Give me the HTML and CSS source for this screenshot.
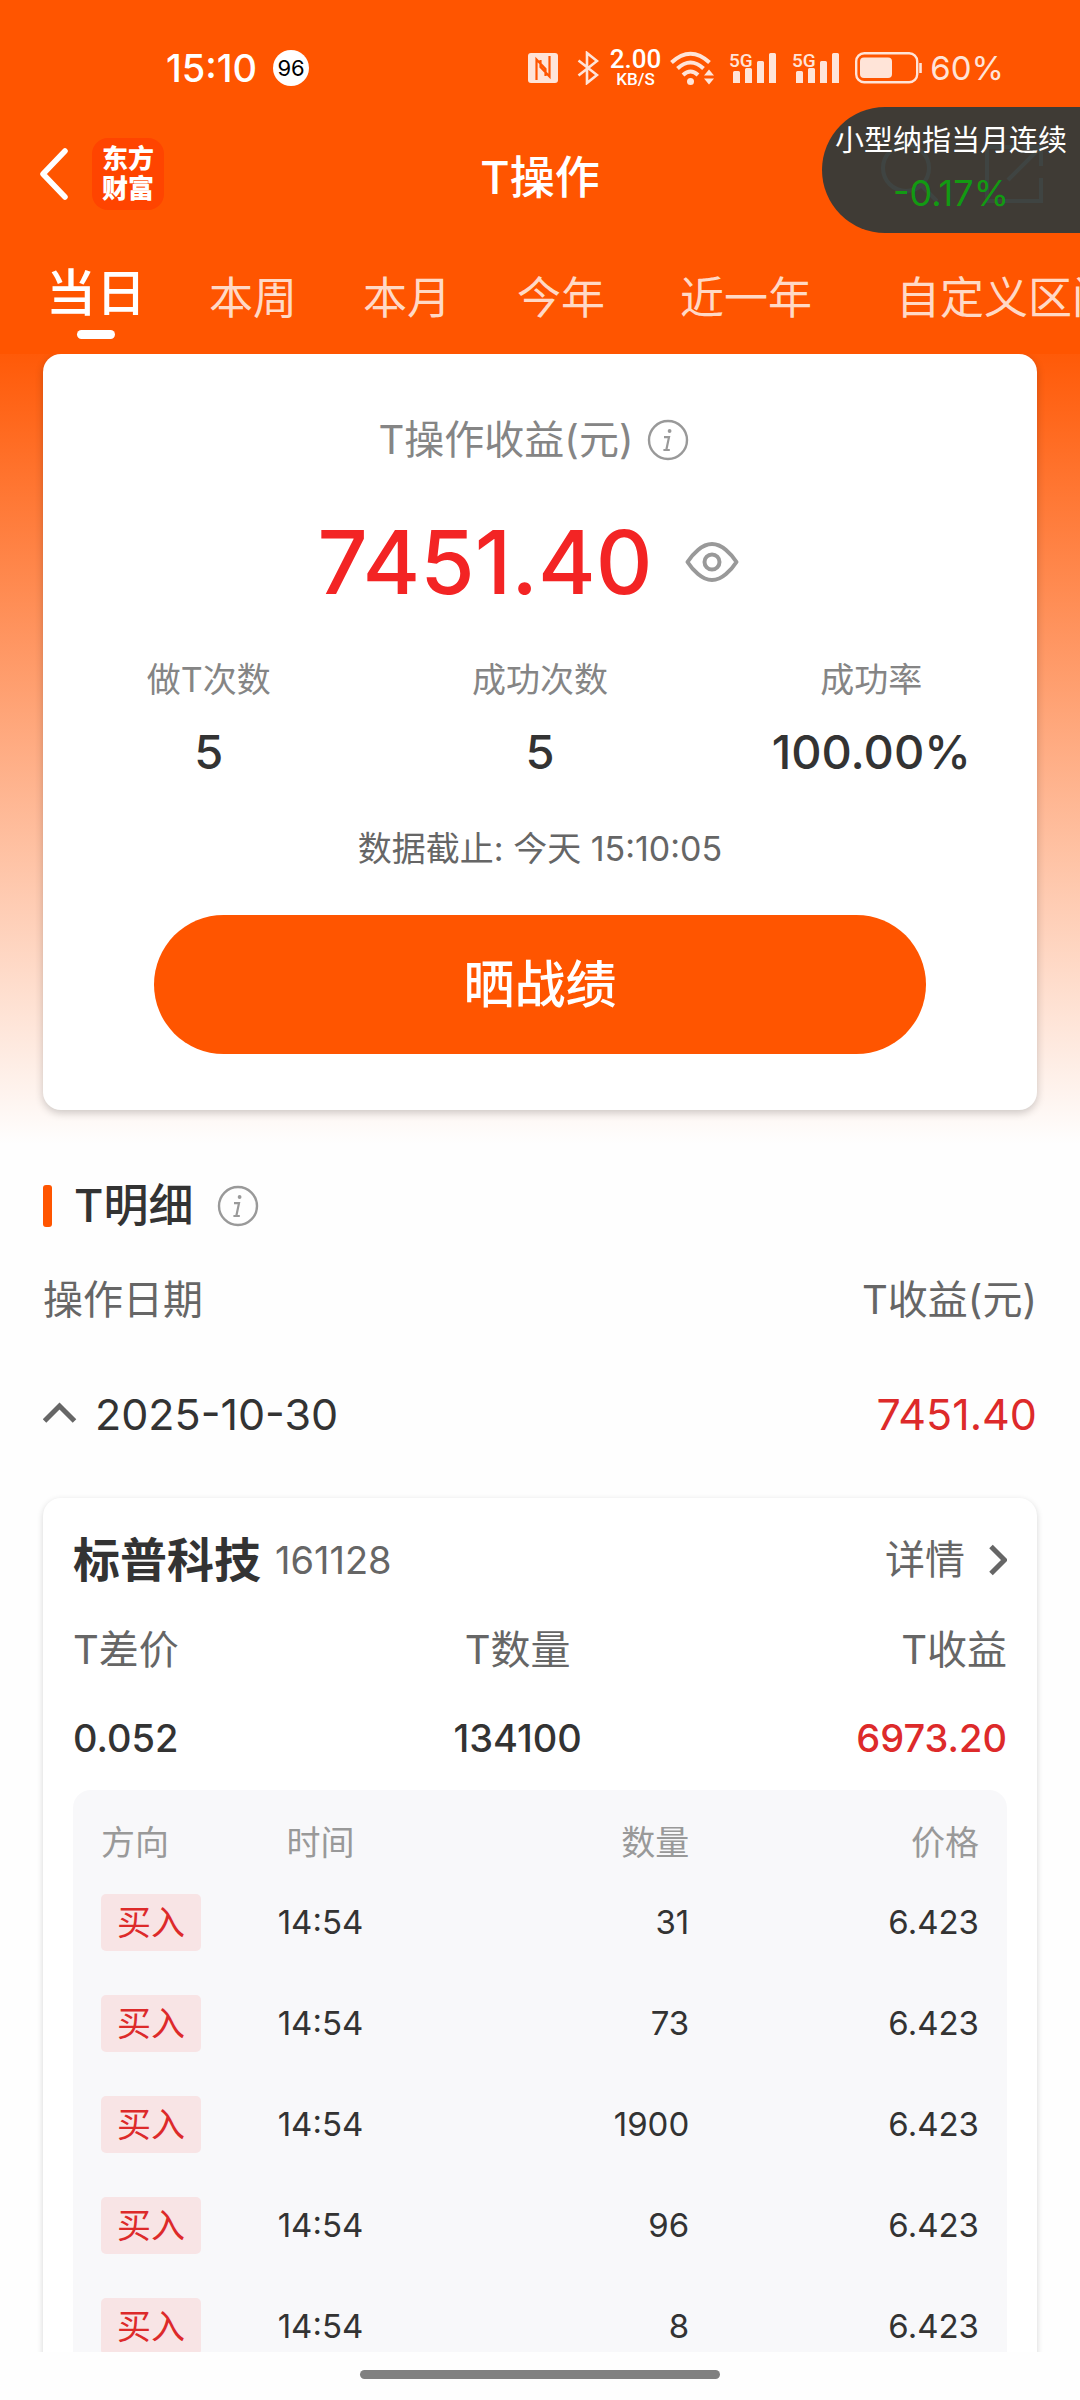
FILE: index.html
```html
<!DOCTYPE html>
<html lang="zh-CN">
<head>
<meta charset="utf-8">
<meta name="viewport" content="width=device-width, initial-scale=1">
<title>T操作</title>
<link rel="stylesheet" href="styles.css">
</head>
<body>
<header class="top">
  <div class="status">
    <div class="status-left">
      <span class="clock">15:10</span>
      <span class="count">96</span>
    </div>
    <div class="status-right">
      <svg class="nfc" width="30" height="30" viewBox="0 0 30 30" aria-label="NFC">
        <rect width="30" height="30" rx="3" fill="currentColor"/>
        <path d="M8.500 27V6.500l9 9.500v7M21.500 3v20.500l-9-9.500V7" fill="none" stroke="#ff5500" stroke-width="2.200"/>
      </svg>
      <svg class="bluetooth" width="22" height="34" viewBox="0 0 22 34" aria-label="蓝牙">
        <path d="M1.500 9.500L20 24 10 32V2l10 8L1.500 24.500" fill="none" stroke="currentColor" stroke-width="2.600"/>
      </svg>
      <span class="speed"><span class="speed-value">2.00</span><span class="speed-unit">KB/S</span></span>
      <svg class="wifi" width="44" height="34" viewBox="0 0 44 34" aria-label="WLAN">
        <g fill="none" stroke="currentColor" stroke-width="4">
          <path d="M1.500 11.500Q20.500-6 39.500 11.500"/>
          <path d="M7.500 17.500Q20.500 5.500 33.500 17.500"/>
          <path d="M13 24Q20.500 17 28 24"/>
        </g>
        <circle cx="20.500" cy="30.500" r="3.500" fill="currentColor"/>
        <path d="M34 24.500l5-6 5 6zM34 27.500h10l-5 6z" fill="currentColor"/>
      </svg>
      <svg class="signal" width="48" height="36" viewBox="0 0 48 36">
        <text class="signal-text" x="0" y="17">5G</text>
        <path d="M4 22.500q0-1.500 1.500-1.500h4q1.500 0 1.500 1.500v10.500h-7zM16 19.500q0-1.500 1.500-1.500h4q1.500 0 1.500 1.500v13.500h-7zM28 12.500q0-1.500 1.500-1.500h4q1.500 0 1.500 1.500v20.500h-7zM40 4.500q0-1.500 1.500-1.500h4q1.500 0 1.500 1.500v28.500h-7z" fill="currentColor"/>
      </svg>
      <svg class="signal" width="48" height="36" viewBox="0 0 48 36">
        <text class="signal-text" x="0" y="17">5G</text>
        <path d="M4 22.500q0-1.500 1.500-1.500h4q1.500 0 1.500 1.500v10.500h-7zM16 19.500q0-1.500 1.500-1.500h4q1.500 0 1.500 1.500v13.500h-7zM28 12.500q0-1.500 1.500-1.500h4q1.500 0 1.500 1.500v20.500h-7zM40 4.500q0-1.500 1.500-1.500h4q1.500 0 1.500 1.500v28.500h-7z" fill="currentColor"/>
      </svg>
      <svg class="battery" width="68" height="32" viewBox="0 0 68 32" aria-hidden="true">
        <rect x="1.200" y="1.200" width="61" height="29" rx="8" fill="none" stroke="currentColor" stroke-width="2.400"/>
        <rect x="5" y="5.500" width="32" height="20.500" rx="4" fill="currentColor"/>
        <path d="M65.500 11v10" stroke="currentColor" stroke-width="2.600"/>
      </svg>
      <span class="battery-level">60%</span>
    </div>
  </div>

  <div class="nav">
    <div class="nav-side">
      <button class="icon-button" aria-label="返回">
        <svg width="32" height="54" viewBox="0 0 32 54"><path d="M29 4L7 27l22 23" fill="none" stroke="currentColor" stroke-width="5.500" stroke-linecap="round" stroke-linejoin="round"/></svg>
      </button>
      <a class="logo" href="#"><span>东方</span><span>财富</span></a>
    </div>
    <h1 class="nav-title">T操作</h1>
    <div class="nav-side nav-side--end">
      <button class="icon-button" aria-label="搜索">
        <svg width="60" height="60" viewBox="0 0 60 60"><circle cx="28" cy="24" r="23" fill="none" stroke="currentColor" stroke-width="4"/><path d="M43 41l16 16" stroke="currentColor" stroke-width="4"/></svg>
      </button>
      <button class="icon-button" aria-label="分享">
        <svg width="60" height="60" viewBox="0 0 60 60"><path d="M30 3H3v54h54V34M38 3h19v19M57 3L24 36" fill="none" stroke="currentColor" stroke-width="4"/></svg>
      </button>
    </div>
  </div>

  <nav class="tabs">
    <button class="tab tab--active">当日</button>
    <button class="tab">本周</button>
    <button class="tab">本月</button>
    <button class="tab">今年</button>
    <button class="tab tab--long">近一年</button>
    <button class="tab tab--long">自定义区间</button>
  </nav>
</header>

<aside class="ticker">
  <span class="ticker-name">小型纳指当月连续</span>
  <span class="ticker-change">-0.17%</span>
</aside>

<main class="content">
  <section class="card summary">
    <div class="summary-title">
      <h2>T操作收益(元)</h2>
      <button class="icon-button muted" aria-label="说明">
        <svg width="42" height="42" viewBox="0 0 42 42"><circle cx="21" cy="21" r="19" fill="none" stroke="currentColor" stroke-width="2.400"/><circle cx="22.600" cy="12" r="1.900" fill="currentColor"/><path d="M17 18.200h5l-2.600 12.200M16.400 31h6.400" fill="none" stroke="currentColor" stroke-width="2.200"/></svg>
      </button>
    </div>
    <div class="summary-total">
      <span class="total">7451.40</span>
      <button class="icon-button muted" aria-label="隐藏金额">
        <svg width="54" height="42" viewBox="0 0 54 42"><path d="M2.500 21Q7 14 13 9Q20 3 27 3T41 9Q47 14 51.500 21Q47 28 41 33Q34 39 27 39T13 33Q7 28 2.500 21Z" fill="none" stroke="currentColor" stroke-width="4" stroke-linejoin="round"/><circle cx="27" cy="21" r="7.500" fill="none" stroke="currentColor" stroke-width="4"/></svg>
      </button>
    </div>
    <dl class="stats">
      <div><dt>做T次数</dt><dd>5</dd></div>
      <div><dt>成功次数</dt><dd>5</dd></div>
      <div><dt>成功率</dt><dd>100.00%</dd></div>
    </dl>
    <p class="updated">数据截止: 今天 15:10:05</p>
    <button class="share">晒战绩</button>
  </section>

  <section class="details">
    <div class="details-head">
      <h2>T明细</h2>
      <button class="icon-button muted" aria-label="说明">
        <svg width="42" height="42" viewBox="0 0 42 42"><circle cx="21" cy="21" r="19" fill="none" stroke="currentColor" stroke-width="2.400"/><circle cx="22.600" cy="12" r="1.900" fill="currentColor"/><path d="M17 18.200h5l-2.600 12.200M16.400 31h6.400" fill="none" stroke="currentColor" stroke-width="2.200"/></svg>
      </button>
    </div>
    <div class="list-head"><span>操作日期</span><span>T收益(元)</span></div>
    <button class="day" aria-expanded="true">
      <svg width="34" height="24" viewBox="0 0 34 24"><path d="M1.500 19L16.500 4l15 15" fill="none" stroke="#666" stroke-width="5"/></svg>
      <span class="day-date">2025-10-30</span>
      <span class="rise">7451.40</span>
    </button>

    <article class="card stock">
      <div class="stock-head">
        <h3>标普科技</h3>
        <span class="stock-code">161128</span>
        <a class="stock-link" href="#">详情
          <svg width="20" height="32" viewBox="0 0 20 32"><path d="M4 2.500L17.500 16 4 29.500" fill="none" stroke="currentColor" stroke-width="5"/></svg>
        </a>
      </div>
      <dl class="figures">
        <div><dt>T差价</dt><dd>0.052</dd></div>
        <div class="figure--center"><dt>T数量</dt><dd>134100</dd></div>
        <div class="figure--end"><dt>T收益</dt><dd class="rise">6973.20</dd></div>
      </dl>
      <div class="trades">
        <table>
          <colgroup><col class="col-side"><col class="col-time"><col class="col-number"><col class="col-number"></colgroup>
          <thead>
            <tr><th scope="col" class="side">方向</th><th scope="col">时间</th><th scope="col" class="number">数量</th><th scope="col" class="number">价格</th></tr>
          </thead>
          <tbody>
            <tr><td class="side"><span class="tag">买入</span></td><td>14:54</td><td class="number">31</td><td class="number">6.423</td></tr>
            <tr><td class="side"><span class="tag">买入</span></td><td>14:54</td><td class="number">73</td><td class="number">6.423</td></tr>
            <tr><td class="side"><span class="tag">买入</span></td><td>14:54</td><td class="number">1900</td><td class="number">6.423</td></tr>
            <tr><td class="side"><span class="tag">买入</span></td><td>14:54</td><td class="number">96</td><td class="number">6.423</td></tr>
            <tr><td class="side"><span class="tag">买入</span></td><td>14:54</td><td class="number">8</td><td class="number">6.423</td></tr>
          </tbody>
        </table>
      </div>
    </article>
  </section>
</main>

<footer class="home"><span class="home-bar"></span></footer>
</body>
</html>
```

FILE: styles.css
```css
* {
  box-sizing: border-box;
  margin: 0;
  padding: 0;
}

:root {
  --orange: #ff5500;
  --red: #dd2a2a;
  --ink: #333;
  --text: #666;
  --muted: #999;
}

body {
  display: flex;
  flex-direction: column;
  height: 100vh;
  overflow: hidden;
  background: #fefefe;
  color: var(--ink);
  font-family: Inter, "Noto Sans CJK SC", sans-serif;
  font-size: 40px;
}

button {
  border: 0;
  background: none;
  color: inherit;
  font: inherit;
}

a {
  color: inherit;
  text-decoration: none;
}

h1, h2, h3, th {
  font-weight: 400;
}

svg {
  display: block;
  flex: none;
}

.icon-button {
  flex: none;
}

.muted {
  color: var(--muted);
}

.rise {
  color: var(--red);
}

/* Header */

.top {
  flex: none;
  background: var(--orange);
  color: #fff;
}

.status {
  display: flex;
  justify-content: space-between;
  align-items: center;
  padding: 44px 76px 0 166px;
  line-height: 48px;
}

.status-left,
.status-right {
  display: flex;
  align-items: center;
}

.status-left {
  gap: 16px;
}

.clock {
  font-size: 38px;
  font-weight: 500;
}

.count {
  width: 36px;
  border-radius: 18px;
  background: #fff;
  color: #000;
  font-size: 22px;
  line-height: 36px;
  text-align: center;
}

.status-right {
  gap: 15px;
  color: #ffe4d8;
}

.nfc {
  margin-right: 4px;
}

.bluetooth {
  margin-right: -4px;
}

.speed {
  display: flex;
  flex-direction: column;
  align-items: center;
  color: #fff;
  font-family: Roboto, sans-serif;
  font-weight: 500;
}

.speed-value {
  font-size: 26px;
  line-height: 22px;
}

.speed-unit {
  font-size: 17px;
  line-height: 18px;
}

.wifi {
  margin-left: -6px;
}

.signal-text {
  fill: currentColor;
  font: 500 19px Roboto, sans-serif;
}

.battery-level {
  margin-left: -8px;
  font-size: 33px;
}

.nav {
  display: grid;
  grid-template-columns: 1fr auto 1fr;
  align-items: center;
  height: 164px;
  padding: 0 36px;
}

.nav-side {
  display: flex;
  align-items: center;
  gap: 24px;
}

.nav-side--end {
  justify-content: flex-end;
  gap: 46px;
}

.nav-title {
  font-size: 45px;
  font-weight: 500;
}

.logo {
  display: flex;
  flex-direction: column;
  align-items: center;
  padding: 6px 0;
  width: 72px;
  border-radius: 16px;
  background: #ff4400;
  font-size: 26px;
  font-weight: 900;
  line-height: 30px;
}

.tabs {
  display: flex;
  align-items: flex-start;
  height: 98px;
  padding-left: 16px;
  overflow: hidden;
}

.tab {
  flex: none;
  padding: 0 33px;
  color: #ffd9c6;
  font-size: 44px;
  line-height: 84px;
}

.tab--long {
  padding: 0 42px;
}

.tab--active {
  display: flex;
  flex-direction: column;
  align-items: center;
  padding: 0 30px;
  color: #fff;
  font-size: 50px;
  font-weight: 500;
  line-height: 74px;
}

.tab--active::after {
  content: "";
  width: 38px;
  height: 9px;
  border-radius: 5px;
  background: #fff;
}

/* Floating quote over the header */

.ticker {
  position: absolute;
  top: 107px;
  right: 0;
  display: flex;
  flex-direction: column;
  align-items: center;
  padding: 12px 13px;
  height: 126px;
  border-radius: 63px 0 0 63px;
  background: rgba(53, 58, 56, 0.95);
  color: #fff;
}

.ticker-name {
  font-size: 29px;
  line-height: 44px;
}

.ticker-change {
  color: #129a12;
  font-size: 36px;
  line-height: 60px;
}

/* Scrolling content */

.content {
  flex: 1;
  min-height: 0;
  overflow: hidden auto;
  scrollbar-width: none;
  padding: 0 43px;
  background: linear-gradient(#ff5a08, #fefefe 790px);
}

.card {
  background: #fff;
  border-radius: 18px;
  box-shadow: 0 3px 8px rgba(0, 0, 0, 0.2);
}

.summary {
  display: flex;
  flex-direction: column;
  align-items: center;
  padding-bottom: 56px;
}

.summary-title {
  display: flex;
  align-items: center;
  gap: 13px;
  padding: 56px 13px 0 0;
  color: #858585;
  line-height: 60px;
}

.summary-title h2,
.details-head h2 {
  font-size: inherit;
}

.summary-total {
  display: flex;
  align-items: center;
  gap: 32px;
  padding: 32px 24px 0 0;
  line-height: 120px;
}

.total {
  color: #f32424;
  font-size: 88px;
  font-weight: 500;
}

.stats {
  display: grid;
  grid-template-columns: repeat(3, 1fr);
  align-self: stretch;
  padding-top: 32px;
  text-align: center;
}

.stats dt {
  color: #858585;
  font-size: 34px;
  line-height: 52px;
}

.stats dd {
  padding-top: 16px;
  font-size: 47px;
  font-weight: 500;
  line-height: 60px;
}

.updated {
  padding-top: 42px;
  color: var(--text);
  font-size: 34px;
  line-height: 50px;
}

.share {
  align-self: stretch;
  margin: 41px 111px 0;
  border-radius: 70px;
  background: var(--orange);
  color: #fff;
  font-size: 51px;
  font-weight: 500;
  line-height: 139px;
}

.details-head {
  display: flex;
  align-items: center;
  gap: 24px;
  padding-top: 68px;
  font-size: 45px;
  line-height: 56px;
}

.details-head h2 {
  display: flex;
  align-items: center;
  gap: 22px;
  font-weight: 500;
}

.details-head h2::before {
  content: "";
  width: 9px;
  height: 42px;
  border-radius: 3px;
  background: var(--orange);
}

.list-head {
  display: flex;
  justify-content: space-between;
  padding-top: 36px;
  color: var(--text);
  line-height: 60px;
}

.day {
  display: flex;
  align-items: center;
  gap: 18px;
  width: 100%;
  height: 168px;
  font-size: 43px;
  text-align: left;
}

.day-date {
  flex: 1;
}

.stock {
  padding: 32px 30px;
  box-shadow: 0 2px 6px rgba(0, 0, 0, 0.16);
}

.stock-head {
  display: flex;
  align-items: center;
  gap: 14px;
  color: var(--text);
  line-height: 60px;
}

.stock-head h3 {
  color: var(--ink);
  font-size: 47px;
  font-weight: 700;
}

.stock-code {
  flex: 1;
  font-size: 38px;
}

.stock-link {
  display: flex;
  align-items: center;
  gap: 22px;
}

.figures {
  display: flex;
  justify-content: space-between;
  padding-top: 30px;
  line-height: 60px;
}

.figures dt {
  color: var(--text);
}

.figures dd {
  padding-top: 28px;
  font-size: 38px;
  font-weight: 500;
}

.figure--center {
  text-align: center;
}

.figure--end {
  text-align: right;
}

.trades {
  margin-top: 22px;
  padding: 22px 28px;
  border-radius: 18px;
  background: #f8f8fa;
}

.trades table {
  width: 100%;
  border-collapse: collapse;
  table-layout: fixed;
  font-size: 33px;
  line-height: 57px;
  text-align: center;
}

.trades th {
  height: 60px;
  color: var(--muted);
  font-size: 34px;
}

.trades td {
  height: 101px;
}

.col-side {
  width: 16%;
}

.col-time {
  width: 18%;
}

.col-number {
  width: 33%;
}

.trades .side {
  text-align: left;
}

.trades .number {
  text-align: right;
}

.tag {
  display: inline-block;
  padding: 0 16px;
  border-radius: 5px;
  background: #f8e4e5;
  color: var(--red);
  font-size: 34px;
}

/* System gesture bar */

.home {
  flex: none;
  display: flex;
  justify-content: center;
  align-items: center;
  height: 48px;
  padding-bottom: 3px;
}

.home-bar {
  width: 33.333%;
  height: 9px;
  border-radius: 5px;
  background: #808080;
}
```
